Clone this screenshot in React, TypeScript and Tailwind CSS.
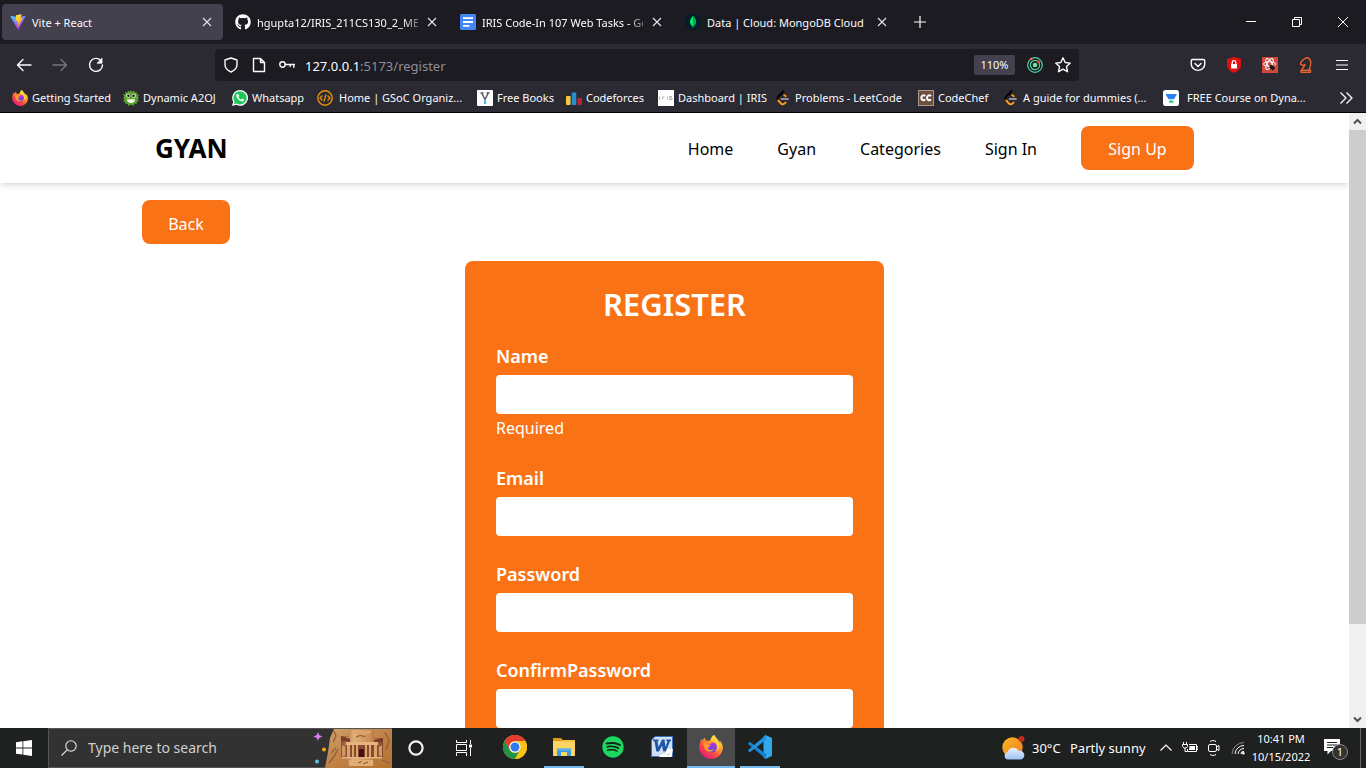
import type { ReactNode } from "react";
import { FaGithub, FaSpotify } from "react-icons/fa";

/* ---------- Browser and favicon drawings ---------- */

const ViteIcon = () => (
  <svg viewBox="0 0 410 404" className="size-4 shrink-0" aria-hidden="true">
    <defs>
      <linearGradient id="viteA" x1="0" y1="0" x2="0.6" y2="0.9">
        <stop offset="0" stopColor="#41D1FF" />
        <stop offset="1" stopColor="#BD34FE" />
      </linearGradient>
      <linearGradient id="viteB" x1="0.4" y1="0" x2="0.6" y2="1">
        <stop offset="0" stopColor="#FFEA83" />
        <stop offset="0.1" stopColor="#FFDD35" />
        <stop offset="1" stopColor="#FFA800" />
      </linearGradient>
    </defs>
    <path d="M399.6 59.5L215.6 388.5C211.8 395.3 202.1 395.4 198.2 388.6L10.6 59.6C6.4 52.2 12.7 43.3 21.1 44.8L205.2 77.7C206.4 77.9 207.6 77.9 208.8 77.7L389.1 44.8C397.4 43.3 403.8 52.1 399.6 59.5Z" fill="url(#viteA)" />
    <path d="M293 1.6L156.800 28.300C154.600 28.700 152.900 30.600 152.800 32.900L144.400 174.400C144.200 177.700 147.200 180.300 150.500 179.500L188.400 170.800C191.900 170 195.100 173.100 194.400 176.600L183.100 231.700C182.400 235.400 185.900 238.600 189.500 237.500L212.900 230.400C216.500 229.300 220 232.500 219.200 236.200L201.400 322.700C200.200 328.100 207.400 331.100 210.400 326.400L212.400 323.300L323.100 102.400C325 98.700 321.800 94.500 317.700 95.300L278.800 102.800C275.100 103.500 272 100.100 273 96.500L298.400 8.400C299.500 4.700 296.300 1 293 1.600Z" fill="url(#viteB)" />
  </svg>
);

const DocsIcon = () => (
  <svg viewBox="0 0 16 16" className="size-4 shrink-0" aria-hidden="true">
    <rect width="16" height="16" rx="1.500" fill="#4285f4" />
    <path d="M3 4.200h10M3 8h10M3 11.800h6.500" stroke="#fff" strokeWidth="1.800" />
  </svg>
);

const MongoIcon = () => (
  <svg viewBox="0 0 16 16" className="size-4 shrink-0" aria-hidden="true">
    <circle cx="8" cy="8" r="8" fill="#001e2b" />
    <path d="M8 2c2 2 3 4 3 5.800 0 2-1.200 3.500-2.600 4.500L8.200 14h-.4l-.2-1.700C6.200 11.300 5 9.800 5 7.800 5 6 6 4 8 2z" fill="#00ed64" />
    <path d="M8 2c2 2 3 4 3 5.800 0 2-1.200 3.500-2.600 4.500L8 13z" fill="#00a651" />
  </svg>
);

const FirefoxIcon = ({ className, id }: { className: string; id: string }) => (
  <svg viewBox="0 0 24 24" className={className} aria-hidden="true">
    <defs>
      <linearGradient id={id + "a"} x1="0.85" y1="0.05" x2="0.2" y2="0.95">
        <stop offset="0" stopColor="#fff44f" />
        <stop offset="0.35" stopColor="#ffa22a" />
        <stop offset="0.65" stopColor="#ff4a3d" />
        <stop offset="1" stopColor="#e31587" />
      </linearGradient>
      <linearGradient id={id + "b"} x1="0.6" y1="0" x2="0.4" y2="1">
        <stop offset="0" stopColor="#b833e1" />
        <stop offset="1" stopColor="#5b49e8" />
      </linearGradient>
    </defs>
    <path d="M22.800 8.500c-.5-1.300-1.600-2.600-2.500-3 .7 1.300 1 2.500 1.200 3.500C20 5.300 17.500 3.800 15.500.6L14.900 0c-2 1.200-3 3.400-3.300 5.300-1.100.1-2.100.4-3 .8C7 5.800 6 4.500 5.900 2.700 4.600 3.400 3.900 4.600 3.300 5.800c-.5-.6-.5-1.600-.4-2.100C1.500 5 .5 8 .4 11c-.7 6.800 4.800 13 11.600 13 6.300 0 11.500-4.800 11.800-11 .1-1.500-.3-3.200-1-4.500z" fill={`url(#${id}a)`} />
    <path d="M7.300 10.200c1-.8 2.300-.7 3.600-.2 1-2.600 3.700-3.400 5.400-1.800 2.200 2 2.200 5.700.3 7.700-2.300 2.400-6.600 2-8.300-.8-1-1.500-1.300-3.300-1-4.900z" fill={`url(#${id}b)`} />
    <path d="M3.300 8.500c2-1.300 4.200-1 5.600.7 1 .7 2.400.7 2.700 1.200-.2.800-1.800 1.300-2.600 2-.2 1.400.7 2.700 2.700 2.700 1.300 0 2-.7 3-.5-1 1.700-3.300 2.800-5.600 2-3-1-4.400-3.700-4-6.100z" fill="#ff9a2b" />
    <path d="M14.900 0c-2 1.200-3 3.400-3.300 5.300 2.700 0 5.400 1.400 6.200 4.100.9 3-.2 5.800-2.200 7.200 3.500-.8 5.300-4 5-7.100C19.500 5.500 17 3.800 15.500.6z" fill="#ffd83d" opacity=".75" />
  </svg>
);

const MonsterIcon = () => (
  <svg viewBox="0 0 16 16" className="size-4 shrink-0" aria-hidden="true">
    <path d="M8 0l1 2 2-1.500.5 2 2.300-.5-.3 2.200 2.500.3-1.300 2L16 8l-1.600 1.200L16 11.500l-2.400.2.200 2.300-2.200-.5L10.500 16 8 14.500 5.500 16l-1.100-2.500-2.200.5.200-2.300-2.400-.2 1.600-2.300L0 8l1.300-1.500L0 4.500l2.500-.3L2.200 2l2.300.5.5-2L7 2z" fill="#5da52f" />
    <circle cx="5.200" cy="5.800" r="2" fill="#fff" />
    <circle cx="10.800" cy="5.800" r="2" fill="#fff" />
    <circle cx="5.400" cy="5.800" r="1.300" fill="#111" />
    <circle cx="10.600" cy="5.800" r="1.300" fill="#111" />
    <path d="M4 9.300h8c0 2.300-1.500 3.700-4 3.700s-4-1.400-4-3.700z" fill="#f5f5e8" />
  </svg>
);

const WhatsappIcon = () => (
  <svg viewBox="0 0 16 16" className="size-4 shrink-0" aria-hidden="true">
    <path d="M8.100 0a7.900 7.900 0 1 1-3.800 14.800L0 16l1.200-4.200A7.900 7.900 0 0 1 8.100 0z" fill="#fff" />
    <path d="M8.100 1.300a6.600 6.600 0 1 1-3.500 12.200L1.900 14.200l.7-2.600A6.600 6.600 0 0 1 8.100 1.300z" fill="#1fc65b" />
    <path d="M5.500 4.100c-1.400.6-1.500 2.300-.4 4 1.500 2.200 3.600 3.600 5.500 3.300 1-.3 1.600-1.100 1.400-1.900l-1.900-.9-1.100 1.100C7.800 9.200 6.900 8.200 6.400 7l.8-.9-.8-2z" fill="#fff" />
  </svg>
);

const GsocIcon = () => (
  <svg viewBox="0 0 16 16" className="mr-[2px] size-4 shrink-0" fill="none" stroke="#e8920c" aria-hidden="true">
    <circle cx="8" cy="8" r="7.200" strokeWidth="1.400" />
    <path d="M5.500 5.500L3 8l2.500 2.500M10.500 5.500L13 8l-2.500 2.500M9 4.500l-2 7" strokeWidth="1.300" />
  </svg>
);

const BooksIcon = () => (
  <svg viewBox="0 0 16 16" className="size-4 shrink-0" fill="none" aria-hidden="true">
    <rect width="16" height="16" rx="1" fill="#fff" />
    <path d="M3.500 3h3M9.500 3h3M5 3.500l3 6 3-6" stroke="#555" strokeWidth="1.400" />
    <path d="M8 9.500V14" stroke="#4fb3e0" strokeWidth="2" />
  </svg>
);

const CodeforcesIcon = () => (
  <svg viewBox="0 0 16 16" className="size-4 shrink-0" aria-hidden="true">
    <rect x="0" y="6" width="4.600" height="9" rx="1" fill="#f6c945" />
    <rect x="5.700" y="2.500" width="4.600" height="12.500" rx="1" fill="#2a8fd0" />
    <rect x="11.400" y="8" width="4.600" height="7" rx="1" fill="#c3202b" />
  </svg>
);

const IrisIcon = () => (
  <svg viewBox="0 0 16 16" className="size-4 shrink-0" stroke="#aaa" fill="none" aria-hidden="true">
    <rect width="16" height="16" fill="#fff" stroke="none" />
    <path d="M1.500 6.500v3M4.500 9.500v-2.500h2M9.500 6.500v3M14 6.500h-2.500v1.500H14v1.500h-3" strokeWidth=".9" />
  </svg>
);

const LeetIcon = () => (
  <svg viewBox="0 0 16 16" className="size-4 shrink-0" fill="none" strokeLinecap="round" aria-hidden="true">
    <path d="M8.500 1L3.300 6.500c-1.200 1.300-1.200 2.600 0 3.900" stroke="#050505" strokeWidth="1.900" />
    <path d="M4.500 5.300c1.500-1.300 3-1.500 4.500-.6l1.300 1" stroke="#050505" strokeWidth="1.800" />
    <path d="M3.300 10.500l2.500 2.800c1.400 1.500 3 1.300 4.800-.8" stroke="#ffa116" strokeWidth="1.900" />
    <path d="M9 5l1.800 1.300" stroke="#ffa116" strokeWidth="1.800" />
    <path d="M6.500 9h6.500" stroke="#b3b3b3" strokeWidth="1.700" />
  </svg>
);

const ChefIcon = () => (
  <svg viewBox="0 0 16 16" className="size-4 shrink-0" fill="none" aria-hidden="true">
    <rect x=".5" y=".5" width="15" height="15" fill="#6b4f3f" stroke="#a99a8c" />
    <path d="M7.300 6.100C5.500 4.600 3.300 5.600 3.300 7.800s2.200 3.200 4 1.700M13 6.100C11.200 4.600 9 5.600 9 7.800s2.200 3.200 4 1.700" stroke="#fff" strokeWidth="2" />
  </svg>
);

const CourseIcon = () => (
  <svg viewBox="0 0 16 16" className="mr-1 size-4 shrink-0" aria-hidden="true">
    <rect width="16" height="16" rx="2.500" fill="#fff" />
    <path d="M3 4h10.500v1L11 9.300H5.500L3 5z" fill="#2d81f7" />
    <path d="M5.500 12.500L7 10.500h2.500l1.500 2z" fill="#08bd80" />
  </svg>
);

const CloseGlyph = () => (
  <svg viewBox="0 0 10 10" className="size-2.5" stroke="#e4e4ea" strokeWidth="1.100" aria-hidden="true">
    <path d="M1 1l8 8M9 1L1 9" />
  </svg>
);

const Line = ({ children, className = "size-4" }: { children: ReactNode; className?: string }) => (
  <svg viewBox="0 0 16 16" className={className} fill="none" stroke="currentColor" strokeWidth="1.400" strokeLinecap="round" strokeLinejoin="round" aria-hidden="true">
    {children}
  </svg>
);

/* ---------- Data ---------- */

const fade = "[mask-image:linear-gradient(to_right,#000_146px,transparent_170px)]";

const tabs = [
  { title: "Vite + React", icon: <ViteIcon />, box: "bg-[#42414d]", mask: "" },
  { title: "hgupta12/IRIS_211CS130_2_MER", icon: <FaGithub className="size-4 shrink-0" />, box: "", mask: fade },
  { title: "IRIS Code-In 107 Web Tasks - Go", icon: <DocsIcon />, box: "", mask: fade },
  { title: "Data | Cloud: MongoDB Cloud", icon: <MongoIcon />, box: "", mask: "" },
];

const bookmarks = [
  { title: "Getting Started", icon: <FirefoxIcon id="bm" className="size-4 shrink-0" />, width: "w-[111px]" },
  { title: "Dynamic A2OJ", icon: <MonsterIcon />, width: "w-[109px]" },
  { title: "Whatsapp", icon: <WhatsappIcon />, width: "w-[85px]" },
  { title: "Home | GSoC Organiz...", icon: <GsocIcon />, width: "w-[160px]" },
  { title: "Free Books", icon: <BooksIcon />, width: "w-[89px]" },
  { title: "Codeforces", icon: <CodeforcesIcon />, width: "w-[92px]" },
  { title: "Dashboard | IRIS", icon: <IrisIcon />, width: "w-[117px]" },
  { title: "Problems - LeetCode", icon: <LeetIcon />, width: "w-[143px]" },
  { title: "CodeChef", icon: <ChefIcon />, width: "w-[85px]" },
  { title: "A guide for dummies (...", icon: <LeetIcon />, width: "w-[160px]" },
  { title: "FREE Course on Dyna...", icon: <CourseIcon />, width: "w-[150px]" },
];

const navLinks = ["Home", "Gyan", "Categories", "Sign In"];

const fields = [
  { id: "name", label: "Name", type: "text", error: "Required" },
  { id: "email", label: "Email", type: "email", error: "" },
  { id: "password", label: "Password", type: "password", error: "" },
  { id: "confirm-password", label: "ConfirmPassword", type: "password", error: "" },
];

/* ---------- Browser chrome ---------- */

function TabStrip() {
  return (
    <div className="flex h-11 shrink-0 items-center bg-[#1c1b22] pl-0.5">
      <div className="flex gap-1">
        {tabs.map((tab) => (
          <div key={tab.title} className={"flex h-9 w-[221px] items-center gap-1.5 rounded px-2 " + tab.box}>
            {tab.icon}
            <span className={"min-w-0 flex-1 pt-0.5 text-[11px] leading-5 whitespace-nowrap " + tab.mask}>{tab.title}</span>
            <button type="button" aria-label="Close tab" className="flex h-5 w-4 items-center justify-center">
              <CloseGlyph />
            </button>
          </div>
        ))}
      </div>
      <button type="button" aria-label="New tab" className="ml-2 flex size-7 items-center justify-center">
        <svg viewBox="0 0 12 12" className="size-3" stroke="#fbfbfe" strokeWidth="1.200" aria-hidden="true">
          <path d="M6 0v12M0 6h12" />
        </svg>
      </button>
      <div className="ml-auto flex">
        <button type="button" aria-label="Minimize" className="flex h-11 w-[46px] items-center justify-center">
          <svg viewBox="0 0 10 10" className="size-2.5" stroke="#fff" aria-hidden="true"><path d="M0 4.500h10" /></svg>
        </button>
        <button type="button" aria-label="Restore" className="flex h-11 w-[46px] items-center justify-center">
          <svg viewBox="0 0 10 10" className="size-2.5" stroke="#fff" fill="none" aria-hidden="true"><path d="M.5 2.500h7v7h-7zM2.500 2.500v-2h7v7h-2" /></svg>
        </button>
        <button type="button" aria-label="Close" className="flex h-11 w-[46px] items-center justify-center">
          <svg viewBox="0 0 10 10" className="size-2.5" stroke="#fff" aria-hidden="true"><path d="M0 0l10 10M10 0L0 10" /></svg>
        </button>
      </div>
    </div>
  );
}

const toolButton = "flex h-8 w-9 items-center justify-center";
const urlButton = "flex h-8 w-7 shrink-0 items-center justify-center";

function Toolbar() {
  return (
    <div className="flex h-[41px] shrink-0 items-center px-1.5">
      <button type="button" aria-label="Back" className={toolButton}>
        <Line><path d="M15 8H1.500M7 2.500L1.500 8 7 13.500" /></Line>
      </button>
      <button type="button" aria-label="Forward" className={toolButton + " text-[#77767e]"}>
        <Line><path d="M1 8h13.500M9 2.500L14.500 8 9 13.500" /></Line>
      </button>
      <button type="button" aria-label="Reload" className={toolButton}>
        <Line><path d="M12.800 3.500A6.500 6.500 0 1 0 14.500 8" /><path d="M14 1.500v4.700H9.500z" fill="currentColor" strokeWidth=".8" /></Line>
      </button>
      <div className="mx-[101px] flex h-8 min-w-0 flex-1 items-center rounded bg-[#1c1b22] px-0.5">
        <span className={urlButton}>
          <Line><path d="M8 1l6 2v4.500c0 3.500-2.500 6-6 7.500-3.500-1.500-6-4-6-7.500V3z" /></Line>
        </span>
        <span className={urlButton}>
          <Line><path d="M2.500 1.500h7l4 4v9h-11zM9.500 1.500v4h4" /></Line>
        </span>
        <span className={urlButton}>
          <Line><circle cx="3.500" cy="7.500" r="2.700" /><path d="M6.300 7.500h9.200M14.800 7.500v2.800M11.200 7.500v2" /></Line>
        </span>
        <div className="ml-1 min-w-0 flex-1 truncate pt-0.5 text-[13px] leading-5">
          127.0.0.1<span className="text-[#8f8e97]">:5173/register</span>
        </div>
        <button type="button" className="mr-1.5 h-5 w-[41px] shrink-0 rounded-xs bg-[#42414d] text-[11px] leading-5">110%</button>
        <button type="button" aria-label="Extension status" className={urlButton}>
          <svg viewBox="0 0 16 16" className="size-4" fill="none" aria-hidden="true">
            <circle cx="8" cy="8" r="7.300" stroke="#4fd1a5" strokeWidth="1.200" />
            <circle cx="8" cy="8" r="4.600" stroke="#4fd1a5" strokeWidth="1.200" />
            <circle cx="8" cy="8" r="2.300" fill="#6ee79a" />
            <circle cx="4.200" cy="2" r="1.300" fill="#ff7139" />
            <circle cx="11.500" cy="4.800" r="1.400" fill="#ff4f3e" />
          </svg>
        </button>
        <button type="button" aria-label="Bookmark this page" className={urlButton}>
          <Line><path d="M8 .8l2.200 4.700 5.100.6-3.800 3.500 1 5.100L8 12.200l-4.500 2.500 1-5.100L.7 6.100l5.100-.6z" /></Line>
        </button>
      </div>
      <button type="button" aria-label="Save to Pocket" className={toolButton}>
        <Line><path d="M2.500 2.500h11a1.200 1.200 0 0 1 1.200 1.200v3.500a6.700 6.200 0 0 1-13.400 0V3.700a1.200 1.200 0 0 1 1.200-1.200zM5 6.500l3 3 3-3" /></Line>
      </button>
      <button type="button" aria-label="Ad blocker" className={toolButton}>
        <svg viewBox="0 0 16 16" className="size-4" aria-hidden="true">
          <path d="M8 0l7 2v5.500c0 4-3 7-7 8.500-4-1.500-7-4.500-7-8.500V2z" fill="#e0100f" />
          <rect x="5" y="7" width="6" height="4.500" fill="#fff" />
          <path d="M6.200 7V5.500a1.800 1.800 0 0 1 3.600 0V7" stroke="#fff" strokeWidth="1.200" fill="none" />
        </svg>
      </button>
      <button type="button" aria-label="React tools" className={toolButton}>
        <svg viewBox="0 0 16 16" className="size-4" fill="none" aria-hidden="true">
          <rect width="16" height="16" fill="#d4483b" />
          <g stroke="#fff" strokeWidth="1">
            <ellipse cx="7.500" cy="7" rx="6" ry="2.300" />
            <ellipse cx="7.500" cy="7" rx="6" ry="2.300" transform="rotate(60 7.500 7)" />
            <ellipse cx="7.500" cy="7" rx="6" ry="2.300" transform="rotate(120 7.500 7)" />
          </g>
          <ellipse cx="10" cy="10.500" rx="2" ry="2.800" fill="#2b1513" transform="rotate(-40 10 10.500)" />
          <path d="M6.500 10.500l6.500 1M8 13l4.500-5M10 14l2.500-4M12 13l-4-4.500" stroke="#2b1513" strokeWidth=".8" />
        </svg>
      </button>
      <button type="button" aria-label="Chess extension" className={toolButton}>
        <svg viewBox="0 0 16 16" className="size-4" fill="none" stroke="#e8622c" strokeWidth="1.400" strokeLinejoin="round" aria-hidden="true">
          <path d="M3 15.200h9.500v-2H3zM4 13.200c0-2.500 2.500-3 3-5.700l-1.500.8L2.700 7.500v-2L5.500 2.500 8 .8c3 0 4.700 2.200 4.700 5 0 3-.7 5-1.700 7.400" />
        </svg>
      </button>
      <button type="button" aria-label="Application menu" className={toolButton}>
        <svg viewBox="0 0 12 12" className="size-3" stroke="#fbfbfe" strokeWidth="1.200" aria-hidden="true">
          <path d="M0 1.500h12M0 6h12M0 10.500h12" />
        </svg>
      </button>
    </div>
  );
}

function BookmarksBar() {
  return (
    <div className="flex h-7 shrink-0 items-center border-b border-black px-3 pb-0.5">
      {bookmarks.map((b) => (
        <a key={b.title} href="#" className={"flex shrink-0 items-center gap-1 text-[11px] leading-4 whitespace-nowrap " + b.width}>
          {b.icon}
          {b.title}
        </a>
      ))}
      <button type="button" aria-label="More bookmarks" className="ml-auto flex size-4 items-center justify-center">
        <svg viewBox="0 0 14 14" className="size-3.5" fill="none" stroke="#fbfbfe" strokeWidth="1.300" aria-hidden="true">
          <path d="M1.500 1.500L7 7l-5.500 5.500M7.500 1.500L13 7l-5.500 5.500" />
        </svg>
      </button>
    </div>
  );
}

/* ---------- Web page ---------- */

function SiteHeader() {
  return (
    <header className="bg-white shadow-md">
      <div className="mx-auto flex h-[70px] w-full max-w-[1065px] items-center justify-between px-[13px] text-black">
        <a href="#" className="text-[26px] leading-9 font-bold">GYAN</a>
        <nav className="flex items-center gap-11 text-[16px] leading-7">
          {navLinks.map((link) => (
            <a key={link} href="#" className="pt-0.5">{link}</a>
          ))}
          <a href="#" className="flex h-11 w-[113px] items-center justify-center rounded-lg bg-[#f97316] pt-0.5 text-white">Sign Up</a>
        </nav>
      </div>
    </header>
  );
}

function RegisterForm() {
  return (
    <form className="mx-auto mt-[17px] w-full max-w-[419px] rounded-lg bg-[#f97316] px-[31px] pt-[25px] pb-24 text-white">
      <h1 className="mb-5 text-center text-[31px] leading-9 font-semibold">REGISTER</h1>
      {fields.map((f) => (
        <div key={f.id} className="mb-6">
          <label htmlFor={f.id} className="mb-[5px] block text-[18px] leading-7 font-semibold">{f.label}</label>
          <input id={f.id} type={f.type} className="block h-[39px] w-full rounded bg-white px-2 text-black outline-none" />
          {f.error && <p className="pt-0.5 text-[16px] leading-6">{f.error}</p>}
        </div>
      ))}
    </form>
  );
}

function Scrollbar() {
  return (
    <div className="flex w-[17px] shrink-0 flex-col items-center bg-[#f0f0f0]">
      <svg viewBox="0 0 17 17" className="size-[17px] shrink-0" fill="none" stroke="#505050" strokeWidth="2" aria-hidden="true"><path d="M5 10.500L8.500 7l3.500 3.500" /></svg>
      <div className="flex min-h-0 w-full flex-1 flex-col">
        <div className="h-[85%] bg-[#cdcdcd]" />
      </div>
      <svg viewBox="0 0 17 17" className="size-[17px] shrink-0" fill="none" stroke="#505050" strokeWidth="2" aria-hidden="true"><path d="M5 6.500L8.500 10 12 6.500" /></svg>
    </div>
  );
}

/* ---------- Taskbar ---------- */

const TempleArt = () => (
  <svg viewBox="0 0 80 39" className="h-[39px] w-20 shrink-0" aria-hidden="true">
    <defs>
      <linearGradient id="rock" x1="0" y1="0" x2="1" y2="1">
        <stop offset="0" stopColor="#cf9f6b" />
        <stop offset=".5" stopColor="#c08248" />
        <stop offset="1" stopColor="#b5712f" />
      </linearGradient>
      <linearGradient id="wall" x1="0" y1="0" x2="1" y2="0">
        <stop offset="0" stopColor="#8d4b33" />
        <stop offset=".3" stopColor="#e0b079" />
        <stop offset=".7" stopColor="#c98d55" />
        <stop offset="1" stopColor="#84442d" />
      </linearGradient>
    </defs>
    <path d="M6 3l1.200 3L10.500 7.500 7.200 9 6 12 4.800 9 1.500 7.500 4.800 6z" fill="#dd7bf0" />
    <circle cx="12" cy="20.500" r="2" fill="#f7a80d" />
    <circle cx="5" cy="32.500" r="2" fill="#5bc4dc" />
    <path d="M13 39l3-16 2-14 4-9h58v39z" fill="url(#rock)" />
    <path d="M22 2l2 5-3 6M19 24l5-5M17 34l6-8 3-6M73 3l4 8-3 10M70 31l7 3" stroke="#8f5f39" strokeWidth="1.300" fill="none" />
    <path d="M38 1h24v8h9v19h-9v9H36v-9h-7V7h9z" fill="url(#wall)" />
    <path d="M29 7l9 3v3l-9-1zM71 9l-9 2v3l9-1z" fill="#7b3c2a" />
    <path d="M40 2h20l-3 3H43z" fill="#dba56c" />
    <path d="M34 13h32v3H34z" fill="#e4b580" />
    <path d="M34 16h32v12H34z" fill="#8a4a30" />
    <path d="M35 16h3v12h-3zM40 16h2v12h-2zM44 16h2v12h-2zM53 16h2v12h-2zM57 16h2v12h-2zM62 16h3v12h-3z" fill="#d9a56d" />
    <path d="M30 16l3 2v8l-3 2zM70 16l-3 2v8l3 2z" fill="#d39a60" />
    <path d="M47 20h5v8h-5z" fill="#40101a" />
    <path d="M30 28h40v1.500H30z" fill="#e4b580" />
    <path d="M37 31h24v6H37z" fill="#dfae74" />
    <path d="M44 8l4-1.500 5 1M46 34l4-1.500M51 35l5-2" stroke="#8d4d2c" fill="none" />
  </svg>
);

const ChromeIcon = () => (
  <svg viewBox="0 0 24 24" className="size-6" aria-hidden="true">
    <circle cx="12" cy="12" r="12" fill="#fbc116" />
    <path d="M1.600 6A12 12 0 0 1 22.400 6H12a6 6 0 0 0-5.400 8.700z" fill="#e33b2e" />
    <path d="M1.600 6A12 12 0 0 0 12 24l5.200-9A6 6 0 0 1 6.800 15z" fill="#1f9447" />
    <path d="M12 24l5.200-9A6 6 0 0 0 16.500 8L22.400 6A12 12 0 0 1 12 24z" fill="#fbc116" />
    <circle cx="12" cy="12" r="5.600" fill="#fff" />
    <circle cx="12" cy="12" r="4.500" fill="#3079ed" />
  </svg>
);

const ExplorerIcon = () => (
  <svg viewBox="0 0 24 24" className="size-6" aria-hidden="true">
    <path d="M1 3h8l2 2h12v3H1z" fill="#d99a1b" />
    <path d="M1 6h22v15H1z" fill="#fcd462" />
    <path d="M11 5h12v2H9z" fill="#f5c344" />
    <path d="M5 13.500h14V21h-4v-4H9v4H5z" fill="#3d9be0" />
    <path d="M5 13.500h14v2H5z" fill="#62b4ee" />
  </svg>
);

const SpotifyIcon = () => (
  <span className="flex size-[22px] items-center justify-center rounded-full bg-[#15241a]">
    <FaSpotify className="size-[22px] text-[#1ed760]" />
  </span>
);

const WordIcon = () => (
  <svg viewBox="0 0 24 24" className="size-6" aria-hidden="true">
    <path d="M5 1.500h17.500v20H1.500V5z" fill="#cfe0f5" stroke="#3c70bd" />
    <path d="M15 14h8l-1.500 8H9l3-4z" fill="#fff" />
    <path d="M3 4.500h5.500v1.500l-1 .3L8.500 12 12 4.500h2.500L15.500 12l2-5.700-1.200-.3V4.500H21V6l-1 .3-4.200 10.200h-2.600L12 10.500l-3 6H6.300L4.500 6.300 3 6z" fill="#1b55a8" />
    <path d="M11 19l3-1.500 2 1.500M17 20.500l3-2" stroke="#a9c3e6" fill="none" />
  </svg>
);

const CodeIcon = () => (
  <svg viewBox="0 0 24 24" className="size-6" aria-hidden="true">
    <path d="M17.500 0L24 3v18l-6.500 3-2-1.500V1.500z" fill="#2fa8ee" />
    <path d="M0 8.200l1.800-1.500L18 19v5L.5 9.300z" fill="#1284cf" />
    <path d="M0 15.800l1.800 1.500L18 5V0L.5 14.700z" fill="#1f94dd" />
  </svg>
);

const TaskViewIcon = () => (
  <svg viewBox="0 0 16 16" className="size-4" fill="none" stroke="#fff" strokeWidth="1" aria-hidden="true">
    <path d="M.5 0v2.500h10V0M.5 4.500h10v6H.5zM.5 16v-3.500h10V16M14.500 0v4M14.500 8v8" />
    <rect x="13" y="4.500" width="3" height="3" fill="#fff" stroke="none" />
  </svg>
);

const apps = [
  { name: "Chrome", icon: <ChromeIcon />, cell: "", bar: "bg-transparent w-10" },
  { name: "File Explorer", icon: <ExplorerIcon />, cell: "", bar: "bg-[#76b9ed] w-10" },
  { name: "Spotify", icon: <SpotifyIcon />, cell: "", bar: "bg-transparent w-10" },
  { name: "Word", icon: <WordIcon />, cell: "", bar: "bg-transparent w-10" },
  { name: "Firefox", icon: <FirefoxIcon id="tb" className="size-6" />, cell: "bg-[#4b4b4b]", bar: "bg-[#76b9ed] w-12" },
  { name: "Visual Studio Code", icon: <CodeIcon />, cell: "", bar: "bg-[#76b9ed] w-10" },
];

function Taskbar() {
  return (
    <footer className="flex h-10 shrink-0 items-center bg-[#1f2020] text-white">
      <button type="button" aria-label="Start" className="flex h-10 w-12 shrink-0 items-center justify-center">
        <svg viewBox="0 0 16 16" className="size-4" fill="#fff" aria-hidden="true">
          <path d="M0 2.200L6.500 1.300v6.200H0zM7.300 1.200L16 0v7.500H7.300zM0 8.400h6.500v6.200L0 13.700zM7.300 8.400H16V16l-8.700-1.200z" />
        </svg>
      </button>
      <div className="flex h-10 w-[344px] shrink-0 items-center border border-r-0 border-[#555] bg-[#323232] pl-3">
        <svg viewBox="0 0 16 16" className="size-4 shrink-0" fill="none" stroke="#e6e6e6" strokeWidth="1.100" aria-hidden="true">
          <circle cx="10" cy="6" r="5.200" /><path d="M6.200 9.800L.5 15.500" />
        </svg>
        <label htmlFor="search" className="sr-only">Search</label>
        <input id="search" type="text" placeholder="Type here to search" className="ml-[11px] min-w-0 flex-1 bg-transparent text-[14px] leading-5 outline-none placeholder:text-[#cfcfcf]" />
        <TempleArt />
      </div>
      <button type="button" aria-label="Cortana" className="flex h-10 w-12 shrink-0 items-center justify-center">
        <svg viewBox="0 0 16 16" className="size-4" fill="none" stroke="#f2f2f2" strokeWidth="2.200" aria-hidden="true"><circle cx="8" cy="8" r="6.600" /></svg>
      </button>
      <button type="button" aria-label="Task View" className="mr-[3px] flex h-10 w-12 shrink-0 items-center justify-center">
        <TaskViewIcon />
      </button>
      <div className="flex gap-px">
        {apps.map((app) => (
          <button key={app.name} type="button" aria-label={app.name} className={"flex h-10 w-12 flex-col items-center " + app.cell}>
            <span className="flex flex-1 items-center">{app.icon}</span>
            <span className={"h-0.5 " + app.bar} />
          </button>
        ))}
      </div>
      <div className="ml-auto flex h-10 items-center">
        <svg viewBox="0 0 24 24" className="size-6 shrink-0" aria-hidden="true">
          <defs>
            <linearGradient id="sun" x1="0" y1="0" x2="1" y2="1"><stop offset="0" stopColor="#fbb829" /><stop offset="1" stopColor="#ef7a1a" /></linearGradient>
            <linearGradient id="cloud" x1="0" y1="0" x2="0" y2="1"><stop offset="0" stopColor="#e8f1fd" /><stop offset="1" stopColor="#9cc3f5" /></linearGradient>
          </defs>
          <circle cx="10.500" cy="11.500" r="10.200" fill="url(#sun)" />
          <circle cx="19.500" cy="3" r="3" fill="#c42b1c" />
          <path d="M6 23.500a3.800 3.800 0 0 1-.3-7.500 6 6 0 0 1 11-1.200 4.500 4.500 0 0 1 2.300 8.700z" fill="url(#cloud)" />
        </svg>
        <span className="ml-1.5 w-[38px] text-[13px] leading-5 whitespace-nowrap">30°C</span>
        <span className="w-[84px] text-[13px] leading-5 whitespace-nowrap">Partly sunny</span>
        <svg viewBox="0 0 12 12" className="ml-1.5 size-3 shrink-0" fill="none" stroke="#fff" strokeWidth="1.200" aria-hidden="true"><path d="M.5 8.500L6 3l5.500 5.500" /></svg>
        <svg viewBox="0 0 16 16" className="ml-2.5 size-4 shrink-0" fill="none" stroke="#fff" aria-hidden="true">
          <path d="M1.500 2v2M4.500 2v2M.5 4.500h5v2l-1.500 1.500h-2L.5 6.500zM3 8v3.500h2M7 4.500h7.500v7H5.500V9M14.500 6.500h1.500v3h-1.500" />
          <path d="M7.500 6h5.500v4H7z" fill="#fff" stroke="none" />
        </svg>
        <svg viewBox="0 0 16 18" className="ml-2 h-[18px] w-4 shrink-0" fill="none" stroke="#fff" aria-hidden="true">
          <rect x="2.500" y="5.500" width="8" height="7" rx="1.500" /><path d="M10.500 8l2.500-1.500v5L10.500 10M4 2.500c2-1.300 4-1.300 6 0M4 15.500c2 1.300 4 1.300 6 0" />
        </svg>
        <svg viewBox="0 0 16 16" className="ml-2 size-4 shrink-0" fill="none" stroke="#fff" aria-hidden="true">
          <path d="M2 14A12 12 0 0 1 14 2.500" stroke="#8b8b8b" /><path d="M5 14a9 9 0 0 1 9-8.500M8 14a6 6 0 0 1 6-5.500M10.800 14a3.200 3.200 0 0 1 3.200-2.800" /><circle cx="13.300" cy="13.300" r="1.300" fill="#fff" stroke="none" />
        </svg>
        <div className="ml-1 flex w-[62px] flex-col items-center text-[11px] leading-[18px] whitespace-nowrap">
          <span>10:41 PM</span>
          <span>10/15/2022</span>
        </div>
        <button type="button" aria-label="1 new notification" className="relative ml-3 size-6 shrink-0">
          <svg viewBox="0 0 24 24" className="size-6" aria-hidden="true">
            <path d="M0 3h16v12H7l-3.500 3.500V15H0z" fill="#fff" />
            <path d="M3 6.500h10M3 9h10M3 11.500h6" stroke="#1f2020" />
          </svg>
          <span className="absolute top-2 left-2 flex size-4 items-center justify-center rounded-full border border-[#8a8a8a] bg-[#333] text-[11px] leading-4">1</span>
        </button>
        <div className="ml-3 h-10 w-1.5 border-l border-[#666]" />
      </div>
    </footer>
  );
}

export default function App() {
  return (
    <div className="flex h-screen flex-col overflow-hidden bg-white font-['Noto_Sans','Open_Sans',sans-serif]">
      <div className="flex shrink-0 flex-col bg-[#2b2a33] text-[#fbfbfe]">
        <TabStrip />
        <Toolbar />
        <BookmarksBar />
      </div>
      <div className="flex min-h-0 flex-1">
        <main className="min-w-0 flex-1 overflow-hidden bg-white">
          <SiteHeader />
          <div className="mx-auto w-full max-w-[1065px] pt-[17px]">
            <button type="button" className="flex h-11 w-[88px] items-center justify-center rounded-lg bg-[#f97316] pt-1 text-[16px] leading-7 text-white">Back</button>
            <RegisterForm />
          </div>
        </main>
        <Scrollbar />
      </div>
      <Taskbar />
    </div>
  );
}
